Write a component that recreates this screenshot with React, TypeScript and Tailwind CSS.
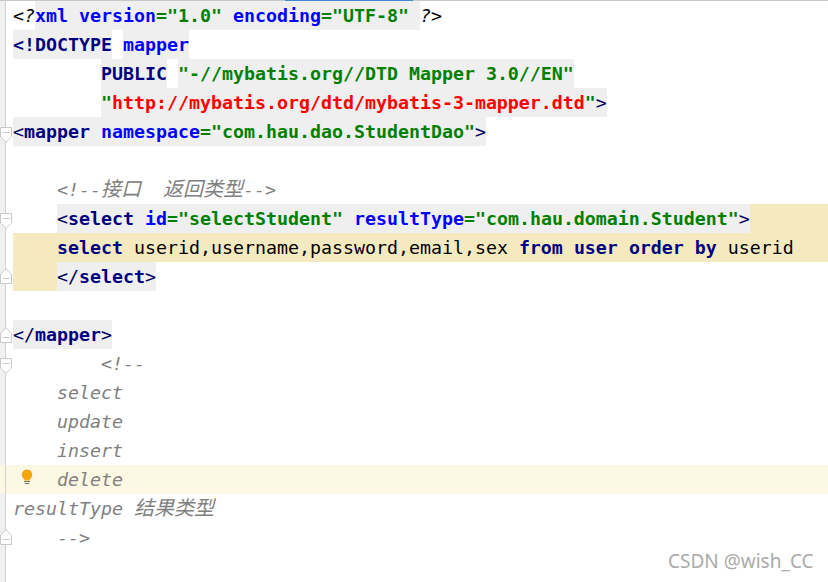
import React from "react";

type P = { children: React.ReactNode };
const Tag = ({ children }: P) => <span className="font-bold text-[#000080]">{children}</span>;
const Br = ({ children }: P) => <span className="font-normal text-[#000060]">{children}</span>;
const Attr = ({ children }: P) => <span className="font-bold text-[#0000ff]">{children}</span>;
const Val = ({ children }: P) => <span className="font-bold text-[#008000]">{children}</span>;
const Gray = ({ children }: P) => <span className="bg-[#efefef]">{children}</span>;
const Cjk = ({ children }: P) => (
  <span className="font-['Noto_Sans_CJK_SC',sans-serif] text-[20px] leading-[0] font-normal italic">{children}</span>
);

function Fold({ up, top }: { up?: boolean; top: string }) {
  return (
    <svg width="12" height="16" viewBox="0 0 12 16" className={`absolute left-0 ${top}`}>
      {up ? (
        <path d="M0.5 15.5H11.5V6L6 0.7L0.5 6Z" fill="#fff" stroke="#c9c9c9" />
      ) : (
        <path d="M0.5 0.5H11.5V10L6 15.3L0.5 10Z" fill="#fff" stroke="#c9c9c9" />
      )}
      <path d={up ? "M2.5 10.5H9.5" : "M2.5 5.5H9.5"} stroke="#c9c9c9" />
    </svg>
  );
}

function Row({
  children,
  fold,
  caret,
  code = "",
}: {
  children?: React.ReactNode;
  fold?: React.ReactNode;
  caret?: boolean;
  code?: string;
}) {
  return (
    <div className={`relative flex h-[29px] shrink-0 ${caret ? "bg-[#fdf8e3]" : ""}`}>
      <div className="w-[13px] shrink-0">
        <div className={`h-full w-[6px] border-r border-[#d2d2d2] ${caret ? "" : "bg-[#f0f0f0]"}`} />
      </div>
      <div className={`flex min-w-0 flex-1 whitespace-pre leading-[29px] ${code}`}>{children}</div>
      {fold}
    </div>
  );
}

export default function App() {
  return (
    <div className="relative flex h-[582px] w-[828px] flex-col overflow-hidden bg-white font-['DejaVu_Sans_Mono',monospace] text-[18.27px] text-black">
      <div className="flex h-px shrink-0 bg-[#c8c8c8]">
        <div className="w-[285px]" />
        <div className="w-[128px] bg-[#3d8bd0]" />
      </div>

      <Row>
        <span>
          {"<"}
          <span className="italic">?</span>
        </span>
        <Gray>
          <Attr>xml version</Attr>
          <Val>="1.0"</Val> <Attr>encoding</Attr>
          <Val>="UTF-8"</Val>{" "}
        </Gray>
        <span>
          <span className="italic">?</span>
          {">"}
        </span>
      </Row>
      <Row>
        <Gray>
          <Tag>{"<!DOCTYPE"}</Tag>
        </Gray>
        <span> </span>
        <Gray>
          <Attr>mapper</Attr>
        </Gray>
      </Row>
      <Row>
        <span>{"        "}</span>
        <Gray>
          <Tag>PUBLIC</Tag>
        </Gray>
        <span> </span>
        <Gray>
          <Val>"-//mybatis.org//DTD Mapper 3.0//EN"</Val>
        </Gray>
      </Row>
      <Row>
        <span>{"        "}</span>
        <Gray>
          <Val>"</Val>
          <span className="font-bold text-[#ff0000]">http://mybatis.org/dtd/mybatis-3-mapper.dtd</span>
          <Val>"</Val>
          <Br>{">"}</Br>
        </Gray>
      </Row>
      <Row fold={<Fold top="top-[10px]" />}>
        <Gray>
          <Br>{"<"}</Br>
          <Tag>{"mapper "}</Tag>
          <Attr>namespace</Attr>
          <Val>="com.hau.dao.StudentDao"</Val>
          <Br>{">"}</Br>
        </Gray>
      </Row>
      <Row />
      <Row>
        <span className="italic text-[#808080]">
          {"    <!--"}
          <Cjk>接口</Cjk>
          {"  "}
          <Cjk>返回类型</Cjk>
          {"-->"}
        </span>
      </Row>
      <Row fold={<Fold top="top-[9px]" />}>
        <span>{"    "}</span>
        <Gray>
          <Br>{"<"}</Br>
          <Tag>{"select "}</Tag>
          <Attr>id</Attr>
          <Val>="selectStudent"</Val> <Attr>resultType</Attr>
          <Val>="com.hau.domain.Student"</Val>
          <Br>{">"}</Br>
        </Gray>
        <div className="flex-1 bg-[#f5eabf]" />
      </Row>
      <Row code="bg-[#f5eabf]">
        <span>
          {"    "}
          <Tag>select</Tag>
          {" userid,username,password,email,sex "}
          <Tag>from</Tag> <Tag>user</Tag> <Tag>order</Tag> <Tag>by</Tag>
          {" userid"}
        </span>
      </Row>
      <Row fold={<Fold up top="top-[6px]" />}>
        <span className="bg-[#f5eabf]">{"    "}</span>
        <Gray>
          <Br>{"</"}</Br>
          <Tag>select</Tag>
          <Br>{">"}</Br>
        </Gray>
      </Row>
      <Row />
      <Row fold={<Fold up top="top-[7px]" />}>
        <Gray>
          <Br>{"</"}</Br>
          <Tag>mapper</Tag>
          <Br>{">"}</Br>
        </Gray>
      </Row>
      <Row fold={<Fold top="top-[9px]" />}>
        <span className="italic text-[#808080]">{"        <!--"}</span>
      </Row>
      <Row>
        <span className="italic text-[#808080]">{"    select"}</span>
      </Row>
      <Row>
        <span className="italic text-[#808080]">{"    update"}</span>
      </Row>
      <Row>
        <span className="italic text-[#808080]">{"    insert"}</span>
      </Row>
      <Row
        caret
        fold={
          <svg width="12" height="16" viewBox="0 0 12 16" className="absolute left-[21px] top-[4px]">
            <path d="M6 0.5a5.2 5.2 0 0 1 3.4 9.1c-.7.6-.9 1.2-.9 1.9h-5c0-.7-.2-1.3-.9-1.9A5.2 5.2 0 0 1 6 0.5Z" fill="#f2a50c" />
            <path d="M3 12.5H9" stroke="#6e6e6e" />
            <path d="M3.8 14.5H8.2" stroke="#6e6e6e" />
          </svg>
        }
      >
        <span className="italic text-[#808080]">{"    delete"}</span>
      </Row>
      <Row>
        <span className="italic text-[#808080]">
          {"resultType "}
          <Cjk>结果类型</Cjk>
        </span>
      </Row>
      <Row fold={<Fold up top="top-[6px]" />}>
        <span className="italic text-[#808080]">{"    -->"}</span>
      </Row>
      <div className="flex min-h-0 flex-1">
        <div className="w-[6px] border-r border-[#d2d2d2] bg-[#f0f0f0]" />
      </div>

      <div className="absolute left-[668px] top-[548px] font-['Noto_Sans',sans-serif] text-[19px] leading-[26px] text-[#aaaaaa]">
        CSDN @wish_CC
      </div>
    </div>
  );
}
